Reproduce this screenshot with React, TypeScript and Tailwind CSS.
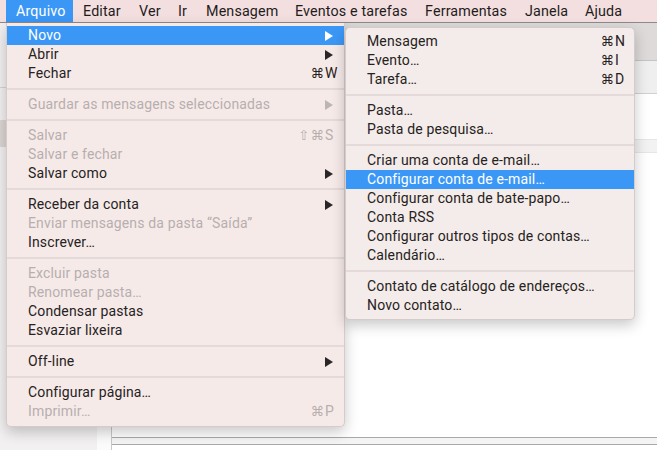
import React from 'react';

type Item = {
  label?: string;
  dis?: boolean;
  mods?: string;
  k?: string;
  arrow?: boolean;
  active?: boolean;
  sep?: boolean;
};

const mainItems: Item[] = [
  { label: 'Novo', arrow: true, active: true },
  { label: 'Abrir', arrow: true },
  { label: 'Fechar', mods: '⌘', k: 'W' },
  { sep: true },
  { label: 'Guardar as mensagens seleccionadas', dis: true, arrow: true },
  { sep: true },
  { label: 'Salvar', dis: true, mods: '⇧⌘', k: 'S' },
  { label: 'Salvar e fechar', dis: true },
  { label: 'Salvar como', arrow: true },
  { sep: true },
  { label: 'Receber da conta', arrow: true },
  { label: 'Enviar mensagens da pasta “Saída”', dis: true },
  { label: 'Inscrever…' },
  { sep: true },
  { label: 'Excluir pasta', dis: true },
  { label: 'Renomear pasta…', dis: true },
  { label: 'Condensar pastas' },
  { label: 'Esvaziar lixeira' },
  { sep: true },
  { label: 'Off-line', arrow: true },
  { sep: true },
  { label: 'Configurar página…' },
  { label: 'Imprimir…', dis: true, mods: '⌘', k: 'P' },
];

const subItems: Item[] = [
  { label: 'Mensagem', mods: '⌘', k: 'N' },
  { label: 'Evento…', mods: '⌘', k: 'I' },
  { label: 'Tarefa…', mods: '⌘', k: 'D' },
  { sep: true },
  { label: 'Pasta…' },
  { label: 'Pasta de pesquisa…' },
  { sep: true },
  { label: 'Criar uma conta de e-mail…' },
  { label: 'Configurar conta de e-mail…', active: true },
  { label: 'Configurar conta de bate-papo…' },
  { label: 'Conta RSS' },
  { label: 'Configurar outros tipos de contas…' },
  { label: 'Calendário…' },
  { sep: true },
  { label: 'Contato de catálogo de endereços…' },
  { label: 'Novo contato…' },
];

const bar: { label: string; w: string; active?: boolean }[] = [
  { label: 'Arquivo', w: 'w-[67px]', active: true },
  { label: 'Editar', w: 'w-[56px]' },
  { label: 'Ver', w: 'w-[39px]' },
  { label: 'Ir', w: 'w-[28px]' },
  { label: 'Mensagem', w: 'w-[89px]' },
  { label: 'Eventos e tarefas', w: 'w-[130px]' },
  { label: 'Ferramentas', w: 'w-[100px]' },
  { label: 'Janela', w: 'w-[60px]' },
  { label: 'Ajuda', w: 'w-[60px]' },
];

function Arrow({ color }: { color: string }) {
  return (
    <svg width="8" height="10" viewBox="0 0 8 10" className="block">
      <polygon points="0,0 8,5 0,10" fill={color} />
    </svg>
  );
}

function Row({ it }: { it: Item }) {
  if (it.sep) {
    return (
      <div className="h-[12px] flex items-center">
        <div className="h-[2px] w-full bg-[#e3dad9]" />
      </div>
    );
  }
  const color = it.active ? 'text-white' : it.dis ? 'text-[#b7afae]' : 'text-[#252221]';
  const arrowColor = it.active ? '#ffffff' : it.dis ? '#bdb5b4' : '#2a2625';
  return (
    <div
      className={`h-[19px] flex items-center pl-[21px] pr-[5px] ${color} ${
        it.active ? 'bg-[#3b97f6]' : ''
      }`}
    >
      <span className="flex-1 whitespace-nowrap">{it.label}</span>
      {it.mods && (
        <span className="font-['DejaVu_Sans',sans-serif] text-[13.5px] tracking-[1px]">{it.mods}</span>
      )}
      <span className="w-[14px] flex items-center">
        {it.k && <span>{it.k}</span>}
        {it.arrow && <Arrow color={arrowColor} />}
      </span>
    </div>
  );
}

export default function App() {
  return (
    <div className="relative w-[657px] h-[450px] overflow-hidden bg-white font-['Roboto',sans-serif] text-[14px] leading-[19px] tracking-[0.15px]">
      {/* menu bar */}
      <div className="h-[23px] flex items-stretch pl-[6px] bg-[#f3dfdf] border-b border-[#8f8a8a] text-[#1f1c1c] text-[14.3px]">
        {bar.map((b) => (
          <div
            key={b.label}
            className={`${b.w} pl-[10px] flex items-center whitespace-nowrap ${
              b.active ? 'bg-[#3b97f6] text-white' : ''
            }`}
          >
            {b.label}
          </div>
        ))}
      </div>

      {/* background window */}
      <div className="flex h-[427px]">
        <div className="w-[112px] flex border-r border-[#c9c9c9]">
          <div className="w-[97px] bg-[#f2f0f0] flex flex-col">
            <div className="h-[65px] border-b border-[#d8d4d4]" />
            <div className="h-[32px]" />
            <div className="h-[27px] bg-[#dcd5d4]" />
          </div>
          <div className="flex-1 bg-[#fbfbfb]" />
        </div>
        <div className="flex-1 flex flex-col">
          <div className="h-[38px] bg-[#dedada] border-b border-[#c4c4c4]" />
          <div className="h-[33px] bg-[#efefef] border-b border-[#d0d0d0]" />
          <div className="h-[45px]" />
          <div className="h-[14px] bg-[#f2f2f2] border-y border-[#e6e6e6]" />
          <div className="flex-1" />
          <div className="h-[8px] border-y border-[#a9a9a9] bg-[#f4f4f4]" />
          <div className="h-[5px]" />
        </div>
      </div>

      {/* main menu */}
      <div className="absolute left-[6px] top-[23px] w-[339px] pt-[3px] pb-[5px] bg-[#f6eae9] rounded-b-[5px] border-x border-b border-[#d4cccb] shadow-[0_5px_14px_rgba(0,0,0,0.22)]">
        {mainItems.map((it, i) => (
          <Row key={i} it={it} />
        ))}
      </div>

      {/* submenu */}
      <div className="absolute left-[345px] top-[27px] w-[290px] py-[4px] bg-[#f4ecea] rounded-[5px] border border-[#d4cccb] shadow-[0_5px_14px_rgba(0,0,0,0.22)]">
        {subItems.map((it, i) => (
          <Row key={i} it={it} />
        ))}
      </div>
    </div>
  );
}
